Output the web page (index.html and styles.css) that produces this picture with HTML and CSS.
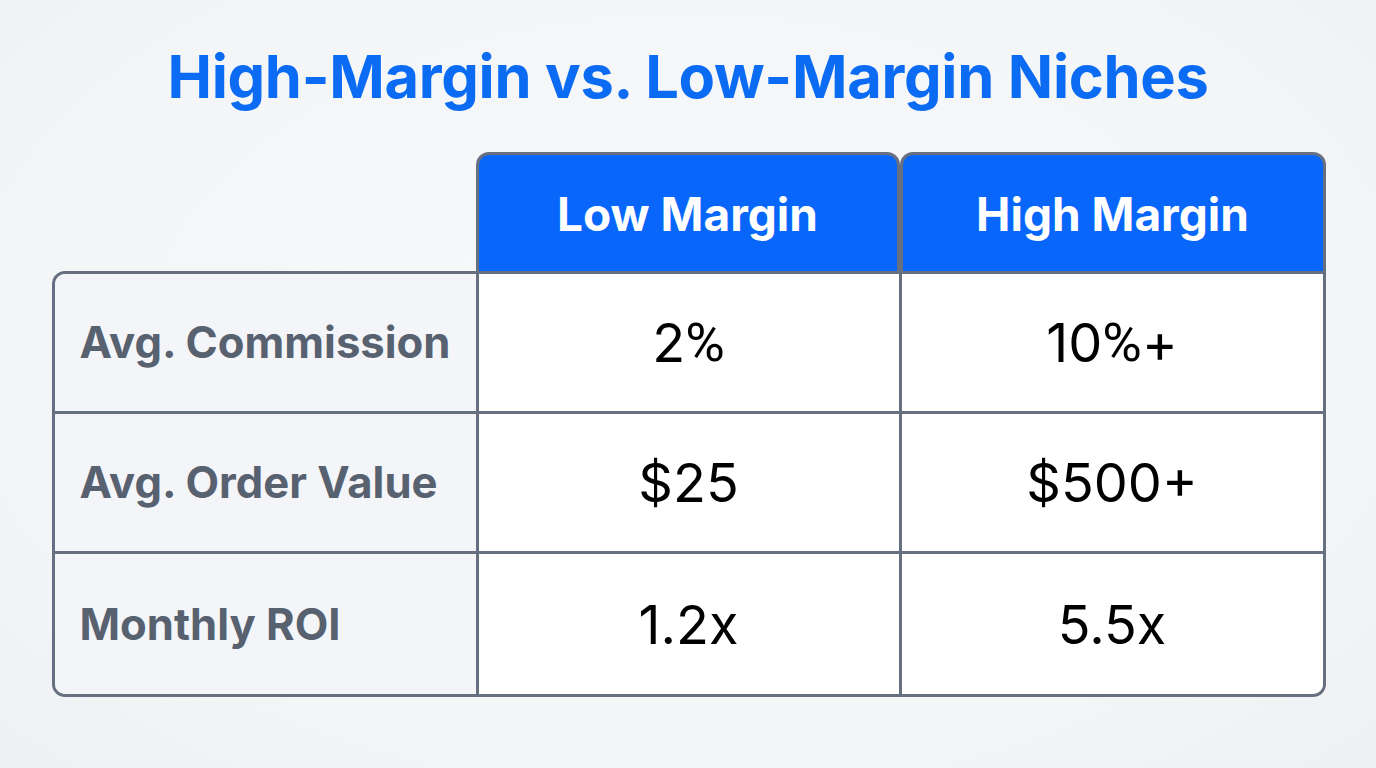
FILE: index.html
```html
<!DOCTYPE html>
<html lang="en">
<head>
<meta charset="utf-8">
<title>High-Margin vs. Low-Margin Niches</title>
<link rel="stylesheet" href="styles.css">
</head>
<body>
<main class="page">
  <h1 class="title">High-Margin vs. Low-Margin Niches</h1>
  <div class="table">
    <div class="head-row">
      <div class="spacer"></div>
      <div class="head">Low Margin</div>
      <div class="head">High Margin</div>
    </div>
    <div class="body">
      <div class="label">Avg. Commission</div>
      <div class="cell">2<span class="pct">%</span></div>
      <div class="cell last">10<span class="pct">%</span>+</div>
      <div class="label">Avg. Order Value</div>
      <div class="cell">$25</div>
      <div class="cell last">$500+</div>
      <div class="label bottom">Monthly ROI</div>
      <div class="cell bottom">1.2x</div>
      <div class="cell last bottom">5.5x</div>
    </div>
  </div>
</main>
</body>
</html>
```

FILE: styles.css
```css
* { box-sizing: border-box; }
html, body { margin: 0; height: 100%; }
body {
  background: radial-gradient(ellipse at 50% 45%, #f8f9fb 0%, #f3f5f7 70%, #eef0f3 100%);
  font-family: Inter, "Noto Sans", sans-serif;
}
.page {
  width: 1376px;
  height: 768px;
  padding-top: 41px;
  display: flex;
  flex-direction: column;
  align-items: center;
}
.title {
  margin: 0;
  font-size: 59.6px;
  line-height: 70px;
  font-weight: 700;
  color: #0b6cf3;
  letter-spacing: -0.3px;
}
.table {
  margin-top: 41px;
  width: 1274px;
  margin-left: 1px;
}
.head-row {
  display: grid;
  grid-template-columns: 424px 424px 426px;
  height: 119px;
}
.head {
  background: #0866fb;
  border: 3px solid #667080;
  border-bottom: none;
  border-radius: 13px 13px 0 0;
  color: #ffffff;
  font-size: 46px;
  font-weight: 700;
  display: flex;
  align-items: center;
  justify-content: center;
  padding-top: 2px;
}
.body {
  display: grid;
  grid-template-columns: 424px 423px 421px;
  grid-auto-rows: 140px;
  border: 3px solid #667080;
  border-radius: 13px 0 13px 13px;
  overflow: hidden;
}
.label {
  background: #f3f5f8;
  color: #586170;
  font-size: 43.6px;
  font-weight: 700;
  display: flex;
  align-items: center;
  padding-left: 25px;
  border-right: 3px solid #667080;
  border-bottom: 3px solid #667080;
}
.cell {
  background: #ffffff;
  color: #000000;
  font-family: Inter, "Noto Sans", sans-serif;
  font-size: 54px;
  display: flex;
  align-items: center;
  justify-content: center;
  border-right: 3px solid #667080;
  border-bottom: 3px solid #667080;
}
.pct { font-family: Roboto, "Liberation Sans", sans-serif; }
.cell.last { border-right: none; }
.bottom { border-bottom: none; }
```
